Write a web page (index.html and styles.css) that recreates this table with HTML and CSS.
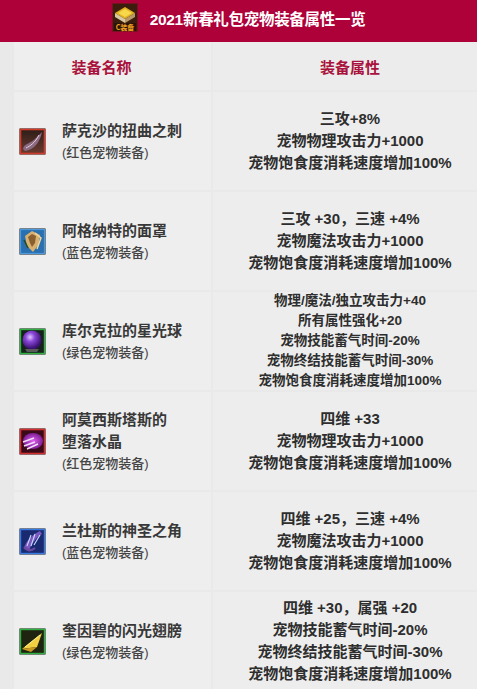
FILE: index.html
```html
<!DOCTYPE html>
<html lang="zh-CN">
<head>
<meta charset="utf-8">
<title>2021新春礼包宠物装备属性一览</title>
<link rel="stylesheet" href="styles.css">
</head>
<body>
<div class="page">
  <header class="titlebar">
    <svg class="logo" width="26" height="29" viewBox="0 0 26 29">
      <rect x="0.5" y="0.5" width="25" height="28" fill="#3a1d0c" stroke="#7a1020"/>
      <polygon points="3,10 13,4 23,10 13,16" fill="#e0b020"/>
      <polygon points="6,10 13,6 20,10 13,14" fill="#f6d84a"/>
      <polygon points="3,10 13,16 13,20 3,14" fill="#d8c8a0"/>
      <polygon points="23,10 13,16 13,20 23,14" fill="#b89868"/>
      <rect x="2" y="20" width="22" height="8" fill="#2a1408"/>
      <text x="13" y="27" text-anchor="middle" class="logo-text">C装备</text>
    </svg>
    <h1 class="title">2021新春礼包宠物装备属性一览</h1>
  </header>

  <div class="table">
    <div class="th th-name">装备名称</div>
    <div class="th th-attr">装备属性</div>

    <div class="td name">
      <svg class="icon" viewBox="0 0 27 27">
        <defs><linearGradient id="g1" x1="0" y1="0" x2="0" y2="1"><stop offset="0" stop-color="#2e1e18"/><stop offset="1" stop-color="#6a3a30"/></linearGradient></defs>
        <rect x="0.5" y="0.5" width="26" height="26" fill="#111"/>
        <rect x="1.5" y="1.5" width="24" height="24" fill="url(#g1)" stroke="#d23a2a" stroke-width="1.6"/>
        <path d="M4 21 C5 15 12 16 18 9 L23 4 C21 14 15 22 6 23 Z" fill="#8a6a80"/>
        <path d="M7 20 C11 18 16 15 20 7" stroke="#e8d0e0" stroke-width="1" fill="none"/>
      </svg>
      <div class="label"><div class="nm">萨克沙的扭曲之刺</div><div class="sub">(红色宠物装备)</div></div>
    </div>
    <div class="td attr">
      <p>三攻+8%</p>
      <p>宠物物理攻击力+1000</p>
      <p>宠物饱食度消耗速度增加100%</p>
    </div>

    <div class="td name">
      <svg class="icon" viewBox="0 0 27 27">
        <rect x="0.5" y="0.5" width="26" height="26" fill="#111"/>
        <rect x="1.5" y="1.5" width="24" height="24" fill="#2a70b0" stroke="#4a9ae0" stroke-width="1.2"/>
        <path d="M6 8 L13 3 L21 7 L20 16 L14 24 L8 18 Z" fill="#d8b070"/>
        <path d="M9 9 L13 6 L17 8 L16 15 L13 19 L11 15 Z" fill="#8a6030"/>
        <path d="M16 5 L22 10 L18 21" stroke="#f0d8a0" stroke-width="1.4" fill="none"/>
        <path d="M5 12 L9 20" stroke="#2a4a20" stroke-width="1.5"/>
      </svg>
      <div class="label"><div class="nm">阿格纳特的面罩</div><div class="sub">(蓝色宠物装备)</div></div>
    </div>
    <div class="td attr">
      <p>三攻 +30，三速 +4%</p>
      <p>宠物魔法攻击力+1000</p>
      <p>宠物饱食度消耗速度增加100%</p>
    </div>

    <div class="td name">
      <svg class="icon" viewBox="0 0 27 27">
        <defs><radialGradient id="g3" cx="0.4" cy="0.35" r="0.6"><stop offset="0" stop-color="#e0c8ff"/><stop offset="0.4" stop-color="#8a48d8"/><stop offset="1" stop-color="#3a1070"/></radialGradient></defs>
        <rect x="0.5" y="0.5" width="26" height="26" fill="#111"/>
        <rect x="1.5" y="1.5" width="24" height="24" fill="#16221a" stroke="#2fb040" stroke-width="1.4"/>
        <circle cx="13" cy="12" r="9.5" fill="url(#g3)"/>
        <path d="M6 21 L20 21 L18 24 L8 24 Z" fill="#5a5a5a"/>
      </svg>
      <div class="label"><div class="nm">库尔克拉的星光球</div><div class="sub">(绿色宠物装备)</div></div>
    </div>
    <div class="td attr small">
      <p>物理/魔法/独立攻击力+40</p>
      <p>所有属性强化+20</p>
      <p>宠物技能蓄气时间-20%</p>
      <p>宠物终结技能蓄气时间-30%</p>
      <p>宠物饱食度消耗速度增加100%</p>
    </div>

    <div class="td name">
      <svg class="icon" viewBox="0 0 27 27">
        <defs><radialGradient id="g4" cx="0.5" cy="0.5" r="0.6"><stop offset="0" stop-color="#e060f0"/><stop offset="1" stop-color="#6a1080"/></radialGradient></defs>
        <rect x="0.5" y="0.5" width="26" height="26" fill="#111"/>
        <rect x="1.5" y="1.5" width="24" height="24" fill="#3a0a18" stroke="#d03030" stroke-width="1.6"/>
        <ellipse cx="14" cy="13" rx="10" ry="8" fill="url(#g4)"/>
        <path d="M4 14 L15 10 M5 18 L16 14 M8 21 L19 16" stroke="#f0e0f8" stroke-width="1.4"/>
      </svg>
      <div class="label"><div class="nm">阿莫西斯塔斯的<br>堕落水晶</div><div class="sub">(红色宠物装备)</div></div>
    </div>
    <div class="td attr">
      <p>四维 +33</p>
      <p>宠物物理攻击力+1000</p>
      <p>宠物饱食度消耗速度增加100%</p>
    </div>

    <div class="td name">
      <svg class="icon" viewBox="0 0 27 27">
        <rect x="0.5" y="0.5" width="26" height="26" fill="#111"/>
        <rect x="1.5" y="1.5" width="24" height="24" fill="#1a2a70" stroke="#3a7ae0" stroke-width="1.4"/>
        <path d="M5 20 C7 13 13 7 21 3 L23 6 C17 10 12 16 10 23 Z" fill="#7a58c0"/>
        <path d="M8 18 L12 7 M12 18 L16 6 M15 17 L21 7" stroke="#c8d8ff" stroke-width="1.1"/>
        <path d="M5 19 Q10 25 16 20" stroke="#6a4aa0" stroke-width="2.2" fill="none"/>
      </svg>
      <div class="label"><div class="nm">兰杜斯的神圣之角</div><div class="sub">(蓝色宠物装备)</div></div>
    </div>
    <div class="td attr">
      <p>四维 +25，三速 +4%</p>
      <p>宠物魔法攻击力+1000</p>
      <p>宠物饱食度消耗速度增加100%</p>
    </div>

    <div class="td name">
      <svg class="icon" viewBox="0 0 27 27">
        <rect x="0.5" y="0.5" width="26" height="26" fill="#111"/>
        <rect x="1.5" y="1.5" width="24" height="24" fill="#1e2410" stroke="#2fb040" stroke-width="1.4"/>
        <path d="M3 21 L23 5 L18 19 Z" fill="#f0d040"/>
        <path d="M3 21 L18 19 L12 24 Z" fill="#c89820"/>
        <path d="M6 19 L21 7" stroke="#fff4a0" stroke-width="0.9"/>
      </svg>
      <div class="label"><div class="nm">奎因碧的闪光翅膀</div><div class="sub">(绿色宠物装备)</div></div>
    </div>
    <div class="td attr">
      <p>四维 +30，属强 +20</p>
      <p>宠物技能蓄气时间-20%</p>
      <p>宠物终结技能蓄气时间-30%</p>
      <p>宠物饱食度消耗速度增加100%</p>
    </div>
  </div>
</div>
</body>
</html>
```

FILE: styles.css
```css
html, body {
  margin: 0;
  padding: 0;
  overflow: hidden;
  background: #e9e9e9;
}

.page {
  width: 477px;
  font-family: "Liberation Sans", "Noto Sans CJK SC", sans-serif;
  color: #333;
}

.titlebar {
  height: 42px;
  box-sizing: border-box;
  padding: 3px 0 10px;
  background: #ae0039;
  display: flex;
  align-items: center;
  justify-content: center;
  gap: 12px;
}

.logo {
  display: block;
  flex: none;
}

.logo-text {
  font-family: "Noto Sans CJK SC", sans-serif;
  font-size: 7px;
  font-weight: 700;
  fill: #f0a020;
}

.title {
  margin: 0;
  font-size: 15.5px;
  font-weight: 700;
  color: #fff;
  letter-spacing: -0.3px;
}

.table {
  display: grid;
  grid-template-columns: 197px 264px;
  grid-auto-rows: 98px;
  grid-template-rows: 48px;
  column-gap: 2px;
  row-gap: 2px;
  padding-left: 14px;
}

.th {
  display: flex;
  align-items: center;
  justify-content: center;
  font-size: 15px;
  font-weight: 700;
  color: #a8123c;
}

.th-name {
  background: #eeeeee;
  padding-right: 22px;
}

.th-attr {
  background: #ececec;
  padding-left: 10px;
}

.td {
  display: flex;
  align-items: center;
}

.name {
  background: #eeeeee;
  padding-left: 5px;
  gap: 16px;
}

.icon {
  width: 27px;
  height: 27px;
  flex: none;
  display: block;
}

.nm {
  font-size: 15px;
  font-weight: 700;
  line-height: 22px;
  color: #383838;
}

.sub {
  font-size: 13px;
  font-weight: 500;
  line-height: 21px;
  color: #444;
}

.attr {
  background: #ededed;
  flex-direction: column;
  justify-content: center;
  padding-left: 10px;
}

.attr p {
  margin: 0;
  font-size: 15px;
  line-height: 22px;
  font-weight: 700;
  color: #2e2e2e;
  text-align: center;
  white-space: nowrap;
}

.attr.small p {
  font-size: 13.5px;
  line-height: 20px;
}
```
